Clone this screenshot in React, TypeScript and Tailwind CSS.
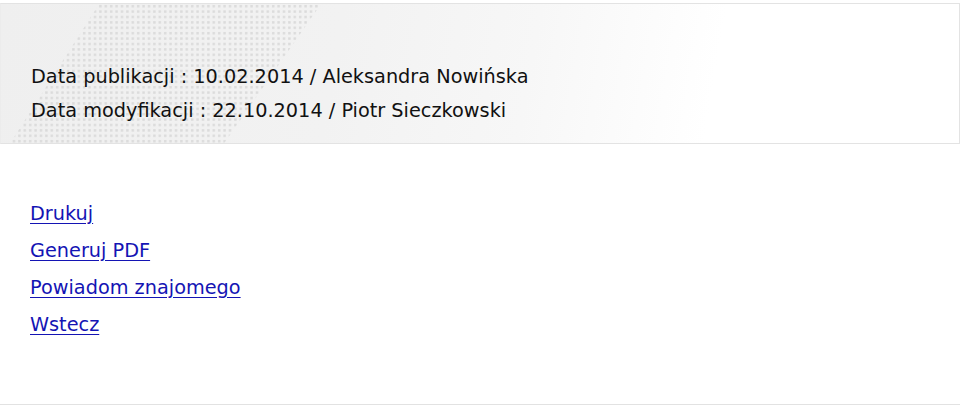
import React from "react";

const links = ["Drukuj", "Generuj PDF", "Powiadom znajomego", "Wstecz"];

function DotBand() {
  return (
    <svg className="absolute inset-0 h-full w-full" aria-hidden="true">
      <defs>
        <pattern id="dots" width="5.4" height="5.4" patternUnits="userSpaceOnUse">
          <rect x="1" y="1" width="2.4" height="2.4" fill="#dadada" />
        </pattern>
      </defs>
      <polygon points="98,0 320,0 222,141 8,141" fill="url(#dots)" />
    </svg>
  );
}

export default function App() {
  return (
    <div className="h-[405px] border-b border-[#e2e2e2] pt-[3px] font-['DejaVu_Sans',sans-serif]">
      {/* info box */}
      <div className="relative h-[141px] overflow-hidden border border-[#e3e3e3] border-l-[#ececec] bg-[linear-gradient(100deg,#efefef_0%,#f2f2f2_35%,#f7f7f7_55%,#ffffff_74%)]">
        <DotBand />
        <div className="relative pl-[30px] pt-[56px] text-[19.3px] leading-[34px] text-[#111]">
          <p>Data publikacji : 10.02.2014 / Aleksandra Nowińska</p>
          <p>Data modyfikacji : 22.10.2014 / Piotr Sieczkowski</p>
        </div>
      </div>

      {/* actions */}
      <ul className="mt-[51px] pl-[30px] text-[19.3px] leading-[37px]">
        {links.map((l) => (
          <li key={l}>
            <a href="#" className="text-[#1414b4] underline underline-offset-[3px]">
              {l}
            </a>
          </li>
        ))}
      </ul>
    </div>
  );
}
